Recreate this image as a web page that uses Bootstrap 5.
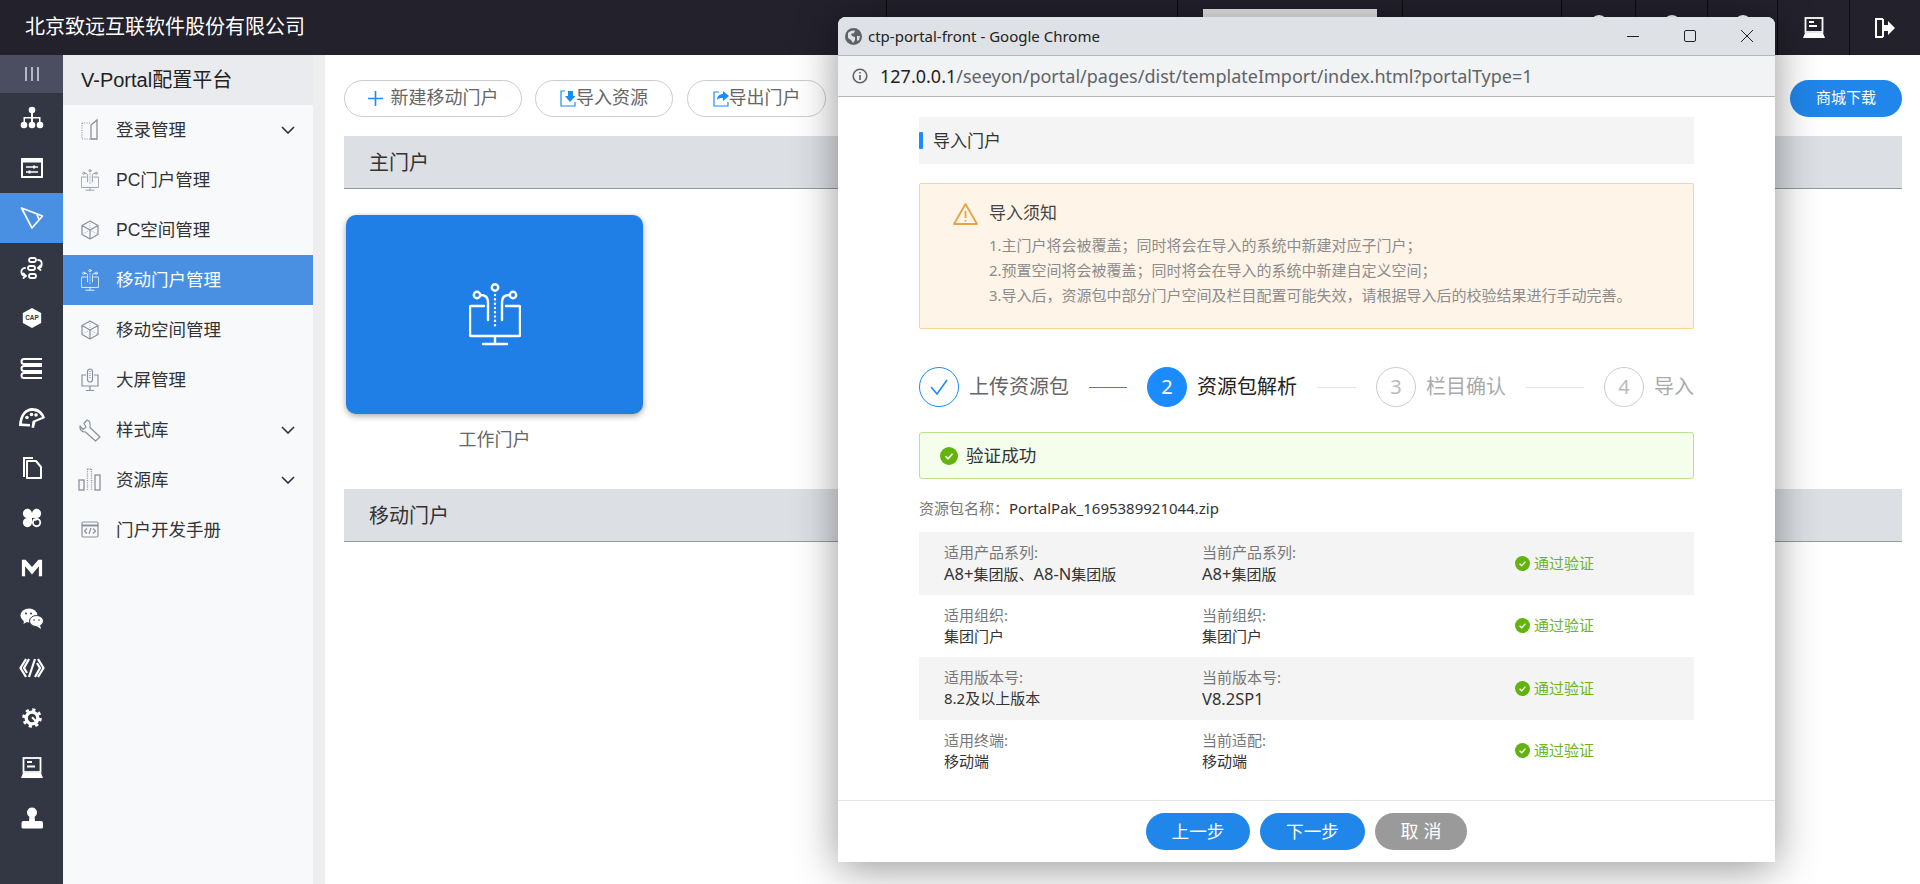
<!DOCTYPE html>
<html lang="zh-CN">

<head>
    <meta charset="UTF-8">
    <meta name="viewport" content="width=device-width, initial-scale=1.0">
    <title>V-Portal配置平台</title>
    <link href="https://cdn.jsdelivr.net/npm/bootstrap@5.3.3/dist/css/bootstrap.min.css" rel="stylesheet">
    <script src="https://cdn.jsdelivr.net/npm/bootstrap@5.3.3/dist/js/bootstrap.bundle.min.js"></script>
    <style>
        html, body { height: 100%; overflow: hidden; }
        body { font-family: "Liberation Sans", "Noto Sans CJK SC", sans-serif; color: #333; background: #fff; position: relative; }
        .flex-none { flex: none; }

        /* top bar */
        .top-bar { height: 55px; background: #22212c; color: #fff; }
        .top-title { width: 886px; padding-left: 25px; font-size: 20px; line-height: 55px; }
        .top-cell { border-left: 1px solid #0c0c10; height: 55px; }
        .top-tab { width: 174px; height: 46px; margin: 9px 0 0 25px; background: #e4e4e4; }
        .top-dot { width: 18px; height: 18px; margin: 15px auto 0; background: #fff; border-radius: 50%; }
        .w-291 { width: 291px; } .w-225 { width: 225px; } .w-159 { width: 159px; }
        .w-74 { width: 74px; } .w-72 { width: 72px; } .w-70 { width: 70px; } .w-71 { width: 71px; }

        /* left rail */
        .rail { width: 63px; background: #333743; color: #fff; }
        .rail-toggle { height: 38px; background: #4b4e60; color: #cfd3de; }
        .rail-item { height: 50px; }
        .rail-item.is-on { background: #4a90e2; }

        /* menu column */
        .menu-col { width: 250px; background: #f8f9fb; }
        .menu-head { height: 50px; padding-left: 18px; background: #e9ebee; font-size: 20px; color: #222; }
        .menu-row { height: 50px; padding: 0 18px; font-size: 17.5px; color: #333; }
        .menu-row.is-on { background: #4a90e2; color: #fff; }
        .menu-ico { width: 18px; height: 24px; margin-right: 17px; color: #8b909b; flex: none; }
        .menu-ico-w { width: 24px; margin-left: -3px; margin-right: 14px; }
        .menu-row.is-on .menu-ico { color: #fff; }
        .menu-arrow { width: 14px; height: 8px; margin-left: auto; color: #2b3040; }
        .side-gap { width: 12px; background: #eee; }

        /* page content */
        .page-main { padding: 25px 18px 0 19px; }
        .tool-row { margin-bottom: 19px; }
        .pill-btn { height: 37px; padding: 0; border: 1px solid #ccc; color: #666; font-size: 18px; background: #fff; }
        .w-178 { width: 178px; } .w-138 { width: 138px; } .w-139 { width: 139px; }
        .pill-gap { margin-right: 13px; }
        .pill-gap-b { margin-right: 14px; }
        .buy-btn { width: 112px; height: 37px; padding: 0; background: #2086ea; color: #fff; font-size: 15px; border: 0; }
        .band { height: 53px; padding: 2px 0 0 25px; background: #dcdfe4; border-bottom: 1px solid #999; font-size: 20px; color: #333; }
        .portal-card { width: 297px; height: 199px; margin: 26px 0 0 2px; background: #1f7fe6; border-radius: 10px; color: #fff; box-shadow: 0 2px 6px rgba(0, 0, 0, .35); }
        .portal-name { width: 297px; margin: 14px 0 37px 2px; font-size: 18px; line-height: 24px; color: #666; }

        /* chrome popup */
        .popup { position: absolute; left: 838px; top: 17px; width: 937px; height: 845px; background: #fff; border-radius: 8px 8px 0 0; box-shadow: 0 6px 44px rgba(0, 0, 0, .42); font-family: "Noto Sans", "Noto Sans CJK SC", sans-serif; }
        .win-title { height: 39px; background: #dee1e6; border-radius: 8px 8px 0 0; border-bottom: 1px solid #b5b7ba; padding-left: 7px; font-size: 15px; color: #222; }
        .win-globe { width: 17px; height: 17px; margin-right: 6px; color: #5f6368; }
        .win-btn { width: 57px; height: 38px; color: #222; }
        .win-addr { height: 41px; background: #f1f3f4; border-bottom: 1px solid #b5b7ba; padding-left: 14px; font-size: 18px; color: #5f6368; }
        .win-addr b { font-weight: 400; color: #222; }
        .win-info { width: 16px; height: 16px; margin-right: 12px; color: #5f6368; }
        .pop-body { padding: 20px 81px 0; height: 703px; }
        .sec-head { height: 47px; padding-left: 14px; background: #f4f4f4; font-size: 17px; color: #333; position: relative; }
        .sec-head::before { content: ""; position: absolute; left: 0; top: 15px; width: 4px; height: 17px; background: #1a8cff; border-radius: 1px; }
        .notice { height: 146px; margin-top: 19px; padding: 16px 0 0 33px; background: #fff4e8; border: 1px solid #f9d58f; border-radius: 2px; }
        .notice-title { font-size: 17px; line-height: 26px; color: #444; }
        .notice-tri { width: 25px; height: 23px; margin-right: 11px; color: #e4a447; }
        .notice-list { margin: 7px 0 0 36px; font-size: 15px; line-height: 25px; color: #8c8c8c; white-space: nowrap; }
        .steps { height: 40px; margin-top: 38px; font-size: 20px; }
        .step-num { width: 40px; height: 40px; border: 1px solid #ccc; border-radius: 50%; color: #bbb; font-size: 20px; flex: none; margin-right: 10px; }
        .step-num.is-done { border-color: #1a8cff; color: #1a8cff; }
        .step-num.is-now { border-color: #1a8cff; background: #1a8cff; color: #fff; }
        .step-line { height: 1px; background: #e4e4e4; margin: 0 20px; flex: none; }
        .step-line.is-done { background: #1a8cff; }
        .w-38 { width: 38px; } .w-39 { width: 39px; } .w-58 { width: 58px; }
        .t-done { color: #666; } .t-now { color: #222; } .t-next { color: #aaa; }
        .ok-box { height: 47px; margin-top: 25px; padding-left: 20px; background: #f4feeb; border: 1px solid #b7e58a; border-radius: 3px; font-size: 17.6px; color: #333; }
        .ok-ico { width: 18px; height: 18px; margin-right: 8px; }
        .pack-name { margin-top: 19px; font-size: 15px; line-height: 20px; color: #777; }
        .pack-name b { font-weight: 400; color: #333; }
        .check-list { margin-top: 14px; }
        .check-row { height: 62.5px; padding-left: 25px; font-size: 15px; line-height: 21px; }
        .check-row.is-alt { background: #f4f4f4; }
        .check-a { width: 258px; } .check-b { width: 313px; }
        .check-key { color: #777; } .check-val { color: #333; }
        .check-lat { font-size: 16.5px; }
        .check-ok { color: #6cb51c; font-size: 15px; }
        .check-ok svg { width: 15px; height: 15px; margin-right: 4px; }
        .pop-foot { height: 61px; border-top: 1px solid #e4e4e4; gap: 10px; }
        .foot-btn { height: 37px; padding: 0; border: 0; color: #fff; font-size: 17.6px; background: #2086ea; }
        .w-104 { width: 104px; } .w-105 { width: 105px; } .w-92 { width: 92px; font-size: 18px; letter-spacing: 5px; text-indent: 5px; background: #9a9a9a; }
    </style>
</head>

<body>
    <!-- icon set -->
    <svg width="0" height="0" class="position-absolute">
        <symbol id="i-portal" viewBox="0 0 52 63" fill="none" stroke="currentColor" stroke-width="2.4" stroke-linecap="round">
            <circle cx="26" cy="4.5" r="3.2"/><circle cx="8" cy="12" r="3.2"/><circle cx="44" cy="12" r="3.2"/>
            <path d="M26 12v33" stroke-dasharray=".1 4.2"/>
            <path d="M11.5 12c5 0 7.5 2 7.5 7v18M40.5 12c-5 0-7.5 2-7.5 7v18"/>
            <path d="M15 23H2q-1 0-1 1v28q0 1 1 1h48q1 0 1-1V24q0-1-1-1H37M26 53v8M14 61h24"/>
        </symbol>
        <symbol id="i-door" viewBox="0 0 18 24" fill="none" stroke="currentColor" stroke-width="1.1">
            <path d="M1 5h8M1 5v16h15" stroke-dasharray="1 1.3"/>
            <path d="M10 7l6-5v19h-6z" stroke-width="1.3"/>
        </symbol>
        <symbol id="i-cube" viewBox="0 0 18 24" fill="none" stroke="currentColor" stroke-width="1.2">
            <path d="M9 3l8 4.500v9L9 21l-8-4.500v-9zM1 7.500l8 4.500 8-4.500M9 12v9" stroke-linejoin="round"/>
            <path d="M1 16.500L9 12l8 4.500M9 3v9" stroke-width=".7" stroke-dasharray="1 1"/>
        </symbol>
        <symbol id="i-mic" viewBox="0 0 18 24" fill="none" stroke="currentColor" stroke-width="1.2">
            <rect x="6.5" y="1" width="5" height="13" rx="2.5"/><path d="M9 3v8" stroke-dasharray="1 1"/>
            <path d="M5 7H1v11h16V7h-4M9 18v4M5 22.5h8"/>
        </symbol>
        <symbol id="i-wrench" viewBox="0 0 24 24" fill="none" stroke="currentColor" stroke-width="1.2" stroke-linejoin="round">
            <path d="M9 2L6 5.500l2 3.500-3 2.500L2 8C1.500 11.500 3.500 14 7.500 14l10 9 4.500-4L12 9.500C12.500 5.500 11.500 2.500 9 2z"/>
        </symbol>
        <symbol id="i-bars" viewBox="0 0 24 24" fill="none" stroke="currentColor" stroke-width="1.3">
            <rect x="1" y="12" width="5" height="10"/><rect x="17" y="7" width="5" height="15"/>
            <path d="M9.500 1v21M13.500 1v21M9.500 1h4" stroke-dasharray="1 1.2"/>
        </symbol>
        <symbol id="i-codewin" viewBox="0 0 18 24" fill="none" stroke="currentColor" stroke-width="1.2">
            <rect x="1" y="4" width="16" height="15" rx="1.5"/><path d="M1 7.500h16" stroke-width="2"/>
            <path d="M6 10.500l-2.500 2.500L6 15.500M12 10.500l2.500 2.500-2.500 2.500M10 10l-2 6"/>
        </symbol>
        <symbol id="i-arrow" viewBox="0 0 14 8" fill="none" stroke="currentColor" stroke-width="1.6"><path d="M1 1l6 6 6-6"/></symbol>
        <symbol id="i-ok" viewBox="0 0 18 18"><circle cx="9" cy="9" r="9" fill="#62b30e"/><path d="M5.500 9.300l2.500 2.500 4.500-5" fill="none" stroke="#fff" stroke-width="1.6"/></symbol>
    </svg>

    <div class="d-flex flex-column h-100">
        <header class="top-bar d-flex flex-none">
            <div class="top-title">北京致远互联软件股份有限公司</div>
            <div class="top-cell w-291"></div>
            <div class="top-cell w-225"><div class="top-tab"></div></div>
            <div class="top-cell w-159"></div>
            <div class="top-cell w-74"><div class="top-dot"></div></div>
            <div class="top-cell w-72"><div class="top-dot"></div></div>
            <div class="top-cell w-70"><div class="top-dot"></div></div>
            <div class="top-cell w-72 d-flex align-items-center justify-content-center">
                <svg width="22" height="22" viewBox="0 0 22 22" fill="none" stroke="#fff" stroke-width="1.8"><rect x="2.500" y="1" width="17" height="14"/><path d="M6 5h5M6 9h8" stroke-width="2"/><path d="M2 16h18l2 5H0z" fill="#fff" stroke="none"/></svg>
            </div>
            <div class="top-cell w-71 d-flex align-items-center justify-content-center">
                <svg width="22" height="22" viewBox="0 0 22 22" fill="none" stroke="#fff" stroke-width="2"><path d="M9 2H2v18h7"/><path d="M9 8h5V4l7 7-7 7v-4H9z" fill="#fff" stroke="none"/><path d="M9 2l0 18"/></svg>
            </div>
        </header>

        <div class="d-flex flex-grow-1">
            <nav class="rail d-flex flex-column flex-none">
                <div class="rail-toggle d-flex align-items-center justify-content-center">
                    <svg width="16" height="16" viewBox="0 0 16 16" stroke="currentColor" stroke-width="1.6"><path d="M2 1v14M8 1v14M14 1v14"/></svg>
                </div>
                <div class="rail-item d-flex align-items-center justify-content-center">
                    <svg width="24" height="24" viewBox="0 0 24 24" fill="#fff"><circle cx="12" cy="4" r="3.3"/><circle cx="4" cy="19" r="3.3"/><circle cx="12" cy="19" r="3.3"/><circle cx="20" cy="19" r="3.3"/><path d="M11 6h2v5h7.500v5h-1.500v-3.500h-6V16h-2v-3.500H5V16H3.500v-5H11z"/></svg>
                </div>
                <div class="rail-item d-flex align-items-center justify-content-center">
                    <svg width="24" height="24" viewBox="0 0 24 24" fill="none" stroke="#fff"><rect x="2" y="3" width="20" height="18" stroke-width="2"/><path d="M2 5h20" stroke-width="3"/><path d="M6 11h12M6 16h12" stroke-width="1.5"/><path d="M14 9.500v3M9.500 14.500v3" stroke-width="2"/></svg>
                </div>
                <div class="rail-item is-on d-flex align-items-center justify-content-center">
                    <svg width="24" height="24" viewBox="0 0 24 24" fill="none" stroke="#fff" stroke-width="1.7" stroke-linejoin="round"><path d="M1.500 2L22.500 10 12 22zM17 8.500l2 5"/></svg>
                </div>
                <div class="rail-item d-flex align-items-center justify-content-center">
                    <svg width="24" height="24" viewBox="0 0 24 24" fill="none" stroke="#fff" stroke-width="1.8" stroke-linecap="round"><rect x="9" y="2" width="7" height="4" rx="2"/><rect x="8" y="10" width="7" height="4" rx="2"/><rect x="9" y="18" width="7" height="4" rx="2"/><path d="M18 4c5 0 5 8 0 8M20.500 9.500L18 12l2.500 2M5 12c-5 0-5 8 1 8M3.500 17.500L6 20l-2.500 2"/></svg>
                </div>
                <div class="rail-item d-flex align-items-center justify-content-center">
                    <svg width="22" height="22" viewBox="0 0 24 24"><path d="M12 1l10 5.500v11L12 23 2 17.500v-11z" fill="#fff"/><text x="12" y="14.500" text-anchor="middle" font-size="7" font-weight="700" font-family="Liberation Sans, sans-serif" fill="#333743">CAP</text></svg>
                </div>
                <div class="rail-item d-flex align-items-center justify-content-center">
                    <svg width="24" height="24" viewBox="0 0 24 24" fill="none" stroke="#fff" stroke-width="2"><path d="M22 3H4Q1.500 3 1.500 5.500T4 8h18M22 10H4Q1.500 10 1.500 12.500T4 15h18M22 17H4Q1.500 17 1.500 19.500T4 22h18"/></svg>
                </div>
                <div class="rail-item d-flex align-items-center justify-content-center">
                    <svg width="26" height="24" viewBox="0 0 26 24" fill="#fff"><path d="M0 20C0 8 7 2 13 2s11 3 13 10l-9.500 4-1.500 6-2.500-.5 1-6.500 9.500-4C21 7 17 5 13 5 7 5 3.500 10 3 17.500l8 .5v2.500z"/><circle cx="8" cy="11.500" r="1.800"/><circle cx="12.500" cy="8.500" r="1.800"/><circle cx="17" cy="9" r="1.800"/></svg>
                </div>
                <div class="rail-item d-flex align-items-center justify-content-center">
                    <svg width="24" height="24" viewBox="0 0 24 24" fill="none" stroke="#fff" stroke-width="2"><path d="M7 5h9l5 6v11H7z" stroke-linejoin="round"/><path d="M4 21V2h9"/></svg>
                </div>
                <div class="rail-item d-flex align-items-center justify-content-center">
                    <svg width="22" height="22" viewBox="0 0 24 24" fill="#fff"><path d="M2 7a5 5 0 0 1 10 0v5H7a5 5 0 0 1-5-5zM22 7a5 5 0 0 0-10 0v5h5a5 5 0 0 0 5-5zM2 17a5 5 0 0 1 5-5h5v5a5 5 0 0 1-10 0z"/><circle cx="17" cy="17" r="4" fill="none" stroke="#fff" stroke-width="2"/><path d="M13 13h4v2h-4z"/></svg>
                </div>
                <div class="rail-item d-flex align-items-center justify-content-center">
                    <svg width="22" height="22" viewBox="0 0 24 24" fill="#fff"><path d="M1 3h4l7 8 7-8h4v18h-3.500V10L12 19 4.500 10v11H1z"/></svg>
                </div>
                <div class="rail-item d-flex align-items-center justify-content-center">
                    <svg width="24" height="24" viewBox="0 0 24 24" fill="#fff"><ellipse cx="9" cy="9.500" rx="8.500" ry="7"/><path d="M4 14l-.5 4 4-2.500z"/><ellipse cx="16.500" cy="15" rx="7" ry="5.500" stroke="#333743"/><path d="M20 19l1 4-4.500-3z"/><circle cx="6" cy="7.500" r="1" fill="#333743"/><circle cx="11" cy="7.500" r="1" fill="#333743"/><circle cx="14" cy="14" r=".8" fill="#333743"/><circle cx="19" cy="14" r=".8" fill="#333743"/></svg>
                </div>
                <div class="rail-item d-flex align-items-center justify-content-center">
                    <svg width="26" height="24" viewBox="0 0 26 24" fill="none" stroke="#fff" stroke-width="2.2"><path d="M7 3L1.500 12 7 21M19 3l5.500 9-5.500 9M16 3l-6 18M10 3L5 12l3 5M16 21l5-9-3-5"/></svg>
                </div>
                <div class="rail-item d-flex align-items-center justify-content-center">
                    <svg width="20" height="20" viewBox="0 0 24 24" fill="none" stroke="#fff"><circle cx="12" cy="12" r="7" stroke-width="4"/><circle cx="12" cy="12" r="10" stroke-width="3.5" stroke-dasharray="3.8 4.05"/><path d="M12 11l7 7" stroke-width="2.5"/></svg>
                </div>
                <div class="rail-item d-flex align-items-center justify-content-center">
                    <svg width="24" height="24" viewBox="0 0 24 24" fill="none" stroke="#fff" stroke-width="1.8"><rect x="3.500" y="2" width="17" height="14"/><path d="M7 6h5M7 10.500h8" stroke-width="2"/><path d="M3 17h18l2 5H1z" fill="#fff" stroke="none"/></svg>
                </div>
                <div class="rail-item d-flex align-items-center justify-content-center">
                    <svg width="24" height="24" viewBox="0 0 24 24" fill="#fff"><circle cx="12" cy="6.500" r="5"/><path d="M9.500 10h5l.5 5h6q2 0 2 2v4q0 1.500-1.500 1.500H3q-1.500 0-1.500-1.500v-4q0-2 2-2h5.500z"/></svg>
                </div>
            </nav>

            <aside class="menu-col flex-none">
                <div class="menu-head d-flex align-items-center">V-Portal配置平台</div>
                <div class="menu-row d-flex align-items-center"><svg class="menu-ico"><use href="#i-door"/></svg>登录管理<svg class="menu-arrow"><use href="#i-arrow"/></svg></div>
                <div class="menu-row d-flex align-items-center"><svg class="menu-ico"><use href="#i-portal"/></svg>PC门户管理</div>
                <div class="menu-row d-flex align-items-center"><svg class="menu-ico"><use href="#i-cube"/></svg>PC空间管理</div>
                <div class="menu-row is-on d-flex align-items-center"><svg class="menu-ico"><use href="#i-portal"/></svg>移动门户管理</div>
                <div class="menu-row d-flex align-items-center"><svg class="menu-ico"><use href="#i-cube"/></svg>移动空间管理</div>
                <div class="menu-row d-flex align-items-center"><svg class="menu-ico"><use href="#i-mic"/></svg>大屏管理</div>
                <div class="menu-row d-flex align-items-center"><svg class="menu-ico menu-ico-w"><use href="#i-wrench"/></svg>样式库<svg class="menu-arrow"><use href="#i-arrow"/></svg></div>
                <div class="menu-row d-flex align-items-center"><svg class="menu-ico menu-ico-w"><use href="#i-bars"/></svg>资源库<svg class="menu-arrow"><use href="#i-arrow"/></svg></div>
                <div class="menu-row d-flex align-items-center"><svg class="menu-ico"><use href="#i-codewin"/></svg>门户开发手册</div>
            </aside>
            <div class="side-gap flex-none"></div>

            <main class="page-main flex-grow-1">
                <div class="tool-row d-flex">
                    <button class="btn pill-btn w-178 pill-gap rounded-pill d-flex align-items-center justify-content-center" type="button">
                        <svg class="me-2" width="15" height="15" viewBox="0 0 15 15" stroke="#1a8cff" stroke-width="1.6"><path d="M7.500 0v15M0 7.500h15"/></svg>新建移动门户
                    </button>
                    <button class="btn pill-btn w-138 pill-gap-b rounded-pill d-flex align-items-center justify-content-center" type="button">
                        <svg width="16" height="17" viewBox="0 0 16 17" fill="none" stroke="#1a8cff" stroke-width="1.2"><path d="M5 1H1v15h14v-4"/><path d="M8 1h5v5h2.500L10 12 5 6h3z" fill="#1a8cff" stroke="none"/></svg>导入资源
                    </button>
                    <button class="btn pill-btn w-139 rounded-pill d-flex align-items-center justify-content-center" type="button">
                        <svg width="16" height="17" viewBox="0 0 16 17" fill="none" stroke="#1a8cff" stroke-width="1.2"><path d="M6 2H1v14h14v-4"/><path d="M4 10c0-4 3-6 6-6V1l6 5-6 5V8c-3 0-5 .5-6 2z" fill="#1a8cff" stroke="none"/></svg>导出门户
                    </button>
                    <button class="btn buy-btn rounded-pill ms-auto" type="button">商城下载</button>
                </div>
                <div class="band d-flex align-items-center">主门户</div>
                <div class="portal-card d-flex align-items-center justify-content-center">
                    <svg width="52" height="63"><use href="#i-portal"/></svg>
                </div>
                <div class="portal-name text-center">工作门户</div>
                <div class="band d-flex align-items-center">移动门户</div>
            </main>
        </div>
    </div>

    <section class="popup d-flex flex-column">
        <div class="win-title d-flex align-items-center">
            <svg class="win-globe" viewBox="0 0 17 17"><circle cx="8.500" cy="8.500" r="8.500" fill="currentColor"/><path d="M3 5c2-2 5-3 7-2l-1 2-3 1 1 2 3 1 0 3-2 3-2-3-3-2zM12 8l3 0-1 4-2 1z" fill="#dee1e6"/></svg>
            <span>ctp-portal-front - Google Chrome</span>
            <div class="d-flex ms-auto">
                <div class="win-btn d-flex align-items-center justify-content-center"><svg width="14" height="14" stroke="currentColor"><path d="M1 7.500h12"/></svg></div>
                <div class="win-btn d-flex align-items-center justify-content-center"><svg width="14" height="14" fill="none" stroke="currentColor"><rect x="1.500" y="1.500" width="11" height="11" rx="1.500"/></svg></div>
                <div class="win-btn d-flex align-items-center justify-content-center"><svg width="14" height="14" stroke="currentColor"><path d="M1 1l12 12M13 1L1 13"/></svg></div>
            </div>
        </div>
        <div class="win-addr d-flex align-items-center">
            <svg class="win-info" viewBox="0 0 16 16" fill="none" stroke="currentColor" stroke-width="1.6"><circle cx="8" cy="8" r="6.800"/><path d="M8 7v5M8 4v1.600"/></svg>
            <span><b>127.0.0.1</b>/seeyon/portal/pages/dist/templateImport/index.html?portalType=1</span>
        </div>

        <div class="pop-body">
            <div class="sec-head d-flex align-items-center">导入门户</div>

            <div class="notice">
                <div class="notice-title d-flex align-items-center">
                    <svg class="notice-tri" viewBox="0 0 25 23" fill="none" stroke="currentColor" stroke-width="1.8" stroke-linejoin="round"><path d="M12.500 2L24 22H1zM12.500 9v7M12.500 18v1.500"/></svg>
                    导入须知
                </div>
                <div class="notice-list">
                    <div>1.主门户将会被覆盖&#xFF1B;同时将会在导入的系统中新建对应子门户&#xFF1B;</div>
                    <div>2.预置空间将会被覆盖&#xFF1B;同时将会在导入的系统中新建自定义空间&#xFF1B;</div>
                    <div>3.导入后&#xFF0C;资源包中部分门户空间及栏目配置可能失效&#xFF0C;请根据导入后的校验结果进行手动完善。</div>
                </div>
            </div>

            <div class="steps d-flex align-items-center text-nowrap">
                <div class="step-num is-done d-flex align-items-center justify-content-center">
                    <svg width="20" height="18" viewBox="0 0 20 18" fill="none" stroke="currentColor" stroke-width="1.6"><path d="M2 9l6 7L18 2"/></svg>
                </div>
                <span class="t-done">上传资源包</span>
                <div class="step-line is-done w-38"></div>
                <div class="step-num is-now d-flex align-items-center justify-content-center">2</div>
                <span class="t-now">资源包解析</span>
                <div class="step-line w-39"></div>
                <div class="step-num d-flex align-items-center justify-content-center">3</div>
                <span class="t-next">栏目确认</span>
                <div class="step-line w-58"></div>
                <div class="step-num d-flex align-items-center justify-content-center">4</div>
                <span class="t-next">导入</span>
            </div>

            <div class="ok-box d-flex align-items-center">
                <svg class="ok-ico"><use href="#i-ok"/></svg>验证成功
            </div>

            <div class="pack-name">资源包名称&#xFF1A;<b>PortalPak_1695389921044.zip</b></div>

            <div class="check-list">
                <div class="check-row is-alt d-flex align-items-center">
                    <div class="check-a"><div class="check-key">适用产品系列:</div><div class="check-val"><span class="check-lat">A8+</span>集团版、<span class="check-lat">A8-N</span>集团版</div></div>
                    <div class="check-b"><div class="check-key">当前产品系列:</div><div class="check-val"><span class="check-lat">A8+</span>集团版</div></div>
                    <div class="check-ok d-flex align-items-center"><svg><use href="#i-ok"/></svg>通过验证</div>
                </div>
                <div class="check-row d-flex align-items-center">
                    <div class="check-a"><div class="check-key">适用组织:</div><div class="check-val">集团门户</div></div>
                    <div class="check-b"><div class="check-key">当前组织:</div><div class="check-val">集团门户</div></div>
                    <div class="check-ok d-flex align-items-center"><svg><use href="#i-ok"/></svg>通过验证</div>
                </div>
                <div class="check-row is-alt d-flex align-items-center">
                    <div class="check-a"><div class="check-key">适用版本号:</div><div class="check-val">8.2及以上版本</div></div>
                    <div class="check-b"><div class="check-key">当前版本号:</div><div class="check-val"><span class="check-lat">V8.2SP1</span></div></div>
                    <div class="check-ok d-flex align-items-center"><svg><use href="#i-ok"/></svg>通过验证</div>
                </div>
                <div class="check-row d-flex align-items-center">
                    <div class="check-a"><div class="check-key">适用终端:</div><div class="check-val">移动端</div></div>
                    <div class="check-b"><div class="check-key">当前适配:</div><div class="check-val">移动端</div></div>
                    <div class="check-ok d-flex align-items-center"><svg><use href="#i-ok"/></svg>通过验证</div>
                </div>
            </div>
        </div>

        <div class="pop-foot d-flex align-items-center justify-content-center">
            <button class="btn foot-btn w-104 rounded-pill" type="button">上一步</button>
            <button class="btn foot-btn w-105 rounded-pill" type="button">下一步</button>
            <button class="btn foot-btn w-92 rounded-pill" type="button">取消</button>
        </div>
    </section>
</body>

</html>
